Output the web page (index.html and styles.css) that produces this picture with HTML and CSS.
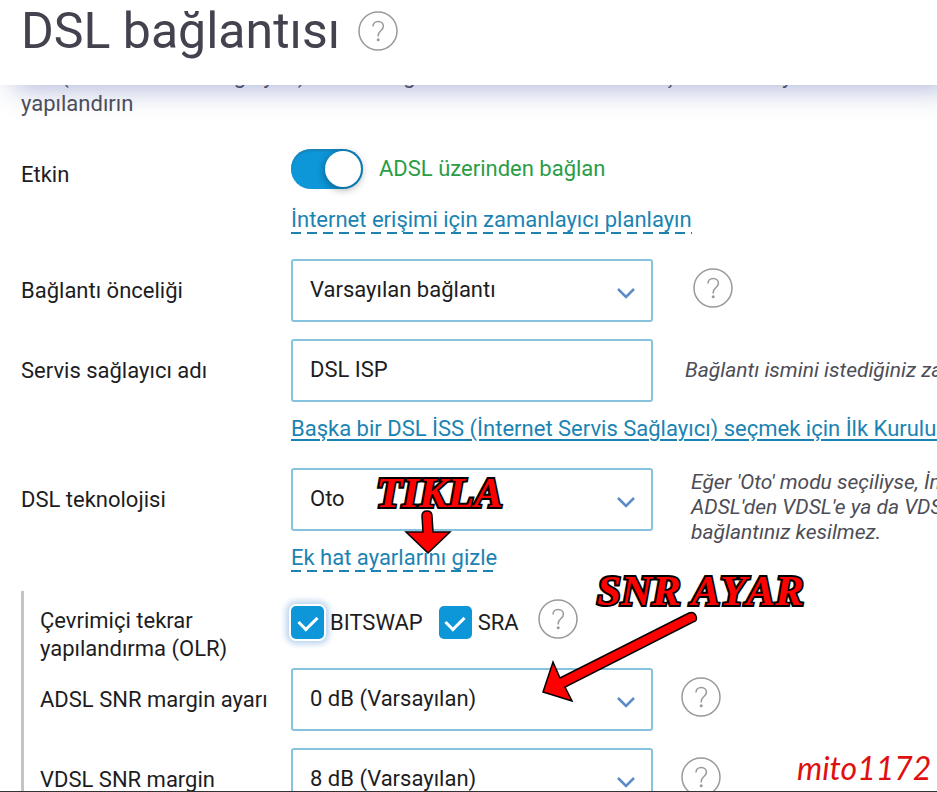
FILE: index.html
```html
<!doctype html>
<html lang="tr">
<head>
<meta charset="utf-8">
<meta name="viewport" content="width=device-width, initial-scale=1">
<link rel="stylesheet" href="styles.css">
<title>DSL bağlantısı</title>
</head>

<body>

<svg class="defs" aria-hidden="true">
	<symbol id="icon-help" viewBox="0 0 40 40">
		<circle cx="20" cy="20" r="19"/>
		<path d="M15 15.500c0-3 2.200-5 5.200-5s5.200 2 5.200 4.700c0 4.300-5.200 4.300-5.200 9.300v1"/>
		<circle class="dot" cx="20.200" cy="28.800" r="1.500"/>
	</symbol>
	<symbol id="icon-down" viewBox="0 0 20 12">
		<path d="M2 2l8 8 8-8"/>
	</symbol>
</svg>

<header class="top">
	<h1>DSL bağlantısı</h1>
	<button class="help" type="button" aria-label="Yardım"><svg><use href="#icon-help"/></svg></button>
</header>

<main class="content">
	<p class="intro">Hat (telefon hattını bağlayan) hattan bağlantısı ve modemi ile hat için hemen ayarları<br>yapılandırın</p>

	<form>
		<div class="row row-switch">
			<label for="enabled">Etkin</label>
			<div class="switch-box">
				<input class="switch" type="checkbox" id="enabled" checked>
				<span class="status">ADSL üzerinden bağlan</span>
			</div>
			<a class="below dashed" href="#">İnternet erişimi için zamanlayıcı planlayın</a>
		</div>

		<div class="row">
			<label for="priority">Bağlantı önceliği</label>
			<div class="select">
				<select id="priority"><option>Varsayılan bağlantı</option></select>
				<svg><use href="#icon-down"/></svg>
			</div>
			<button class="help" type="button" aria-label="Yardım"><svg><use href="#icon-help"/></svg></button>
		</div>

		<div class="row row-near">
			<label for="isp">Servis sağlayıcı adı</label>
			<input class="text" type="text" id="isp" value="DSL ISP">
			<p class="hint">Bağlantı ismini istediğiniz zaman</p>
			<a class="below" href="#">Başka bir DSL İSS (İnternet Servis Sağlayıcı) seçmek için İlk Kurulum</a>
		</div>

		<div class="row">
			<label for="tech">DSL teknolojisi</label>
			<div class="select">
				<select id="tech"><option>Oto</option></select>
				<svg><use href="#icon-down"/></svg>
			</div>
			<p class="hint hint-note">Eğer 'Oto' modu seçiliyse, İnternet<br>ADSL'den VDSL'e ya da VDSL'den<br>bağlantınız kesilmez.</p>
			<a class="below dashed" href="#">Ek hat ayarlarını gizle</a>
		</div>

		<div class="extra">
			<div class="row row-olr">
				<span class="name" id="olr">Çevrimiçi tekrar<br>yapılandırma (OLR)</span>
				<div class="checks" role="group" aria-labelledby="olr">
					<label class="check"><input class="focused" type="checkbox" checked>BITSWAP</label>
					<label class="check"><input type="checkbox" checked>SRA</label>
					<button class="help" type="button" aria-label="Yardım"><svg><use href="#icon-help"/></svg></button>
				</div>
			</div>

			<div class="row row-first">
				<label for="adsl">ADSL SNR margin ayarı</label>
				<div class="select">
					<select id="adsl"><option>0 dB (Varsayılan)</option></select>
					<svg><use href="#icon-down"/></svg>
				</div>
				<button class="help" type="button" aria-label="Yardım"><svg><use href="#icon-help"/></svg></button>
			</div>

			<div class="row row-near">
				<label for="vdsl">VDSL SNR margin</label>
				<div class="select">
					<select id="vdsl"><option>8 dB (Varsayılan)</option></select>
					<svg><use href="#icon-down"/></svg>
				</div>
				<button class="help" type="button" aria-label="Yardım"><svg><use href="#icon-help"/></svg></button>
			</div>
		</div>
	</form>
</main>

<!-- red notes on top of the form -->
<svg class="notes" width="937" height="792" viewBox="0 0 937 792">
	<text class="shout" x="376" y="507">TIKLA</text>
	<path class="arrow" d="M422 516Q422 511 427 511T432 516L433 532H450L428 553L406 532H423Z"/>
	<text class="shout" x="597" y="605">SNR AYAR</text>
	<path class="arrow" d="M689 613Q694 611 696 616T693 622L565 687L572 701L543 692L553 662L560 678Z"/>
	<text class="sign" x="797" y="780">mito1172</text>
</svg>

</body>
</html>
```
FILE: styles.css
```css
*
{
	box-sizing:border-box;
	margin:0;
	padding:0;
}
body
{
	position:relative;
	height:100vh;
	overflow:hidden;
	background:#fff;
	border-bottom:1px solid #333;
	color:#1d1d1f;
	font:22px/28px Roboto,"Liberation Sans",sans-serif;
}
.defs
{
	position:absolute;
	width:0;
	height:0;
}

/* header */
.top
{
	position:relative;
	z-index:1;
	display:flex;
	align-items:flex-start;
	gap:18px;
	height:85px;
	padding:0 21px;
	background:#fff;
	box-shadow:14px 4px 28px rgba(80,95,170,.45);
}
.top h1
{
	color:#43424e;
	font-size:50px;
	font-weight:400;
	line-height:62px;
}
.top .help
{
	margin-top:11px;
}

.help
{
	width:40px;
	height:40px;
	border:0;
	background:none;
	cursor:pointer;
}
.help svg
{
	display:block;
	width:40px;
	height:40px;
	fill:none;
	stroke:#999;
	stroke-width:1.5;
}
.dot
{
	fill:#999;
	stroke:none;
}

/* form */
.content
{
	margin-top:-23px;
	padding-left:21px;
}
.intro
{
	color:#4d4d57;
	white-space:nowrap;
}
.row
{
	display:grid;
	grid-template-columns:270px 362px 1fr;
	align-items:center;
	margin-top:25px;
	white-space:nowrap;
}
.row-near
{
	margin-top:17px;
}
.row-switch
{
	align-items:end;
	margin-top:31px;
}
.row > .help
{
	margin:0 0 6px 40px;
}
.below
{
	grid-column:2 / 4;
	justify-self:start;
	margin-top:13px;
	color:#1b83b3;
	text-decoration-thickness:2px;
	text-underline-offset:3px;
}
.row-switch .below
{
	margin-top:17px;
}
.dashed
{
	background:repeating-linear-gradient(90deg,#1b83b3 0 10px,transparent 10px 16px) left bottom / 100% 2px no-repeat;
	text-decoration:none;
}
.hint
{
	padding-left:32px;
	color:#4d4d57;
	font-size:21px;
	font-style:italic;
	line-height:25px;
}
/* three lines, hangs a bit below the field */
.hint-note
{
	align-self:start;
	padding:2px 0 0 38px;
	margin-bottom:-14px;
}

.switch-box
{
	display:flex;
	align-items:center;
	gap:16px;
}
.status
{
	color:#2a9d46;
}
.switch
{
	appearance:none;
	width:72px;
	height:40px;
	padding:2px;
	border-radius:20px;
	background:#0d96d8;
	box-shadow:inset 0 2px 2px #1a82b8;
}
.switch::before
{
	content:"";
	display:block;
	width:36px;
	height:36px;
	margin-left:32px;
	border-radius:50%;
	background:#fff;
	box-shadow:0 2px 8px rgba(0,0,0,.4);
}

.text,.select select
{
	appearance:none;
	display:block;
	width:100%;
	height:63px;
	padding:0 48px 2px 17px;
	border:2px solid #87c3de;
	border-radius:3px;
	background:#fff;
	color:#1d1d1f;
	font:inherit;
}
.select
{
	position:relative;
}
.select svg
{
	position:absolute;
	right:17px;
	top:28px;
	width:20px;
	height:12px;
	fill:none;
	stroke:#5b8cc8;
	stroke-width:2.5;
	pointer-events:none;
}

/* extra line settings */
.extra
{
	margin-top:19px;
	padding:8px 0 40px 16px;
	border-left:3px solid #c4c4c4;
}
.extra .row
{
	grid-template-columns:251px 362px 1fr;
}
.extra .row > .help
{
	margin-left:28px;
}
.extra .row-olr
{
	align-items:start;
	margin-top:0;
}
.extra .row-first
{
	margin-top:5px;
}
.name
{
	padding-top:8px;
}
.checks
{
	display:flex;
	align-items:flex-end;
	gap:16px;
}
.checks .help
{
	margin-left:3px;
}
.check
{
	display:flex;
	align-items:center;
	gap:6px;
}
.check input
{
	appearance:none;
	display:grid;
	place-items:center;
	width:33px;
	height:33px;
	border-radius:5px;
	background:#0d96d8;
}
.check input::before
{
	content:"";
	width:9px;
	height:15px;
	margin-bottom:3px;
	border:solid #fff;
	border-width:0 3px 3px 0;
	transform:rotate(45deg);
}
.check .focused
{
	box-shadow:0 0 0 2px #fff,0 0 6px 5px #b9d3ee;
}

/* notes */
.notes
{
	position:absolute;
	left:0;
	top:0;
	z-index:2;
	pointer-events:none;
}
.shout
{
	fill:#f00;
	stroke:#000;
	stroke-width:4;
	paint-order:stroke;
	font:italic bold 43px "Liberation Serif",serif;
	font-kerning:none;
}
.arrow
{
	fill:#f00;
	stroke:#000;
	stroke-width:1.5;
}
.sign
{
	fill:#e01010;
	font:italic 32px Lato,sans-serif;
}
```
